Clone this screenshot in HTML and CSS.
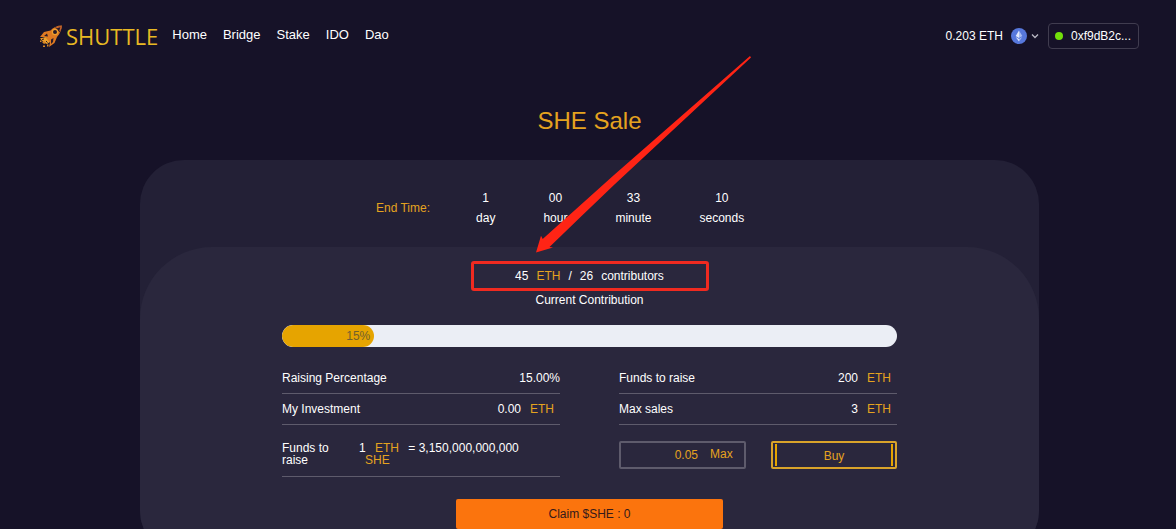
FILE: index.html
```html
<!DOCTYPE html>
<html lang="en">
<head>
<meta charset="utf-8">
<title>Shuttle - SHE Sale</title>
<link rel="stylesheet" href="styles.css">
</head>
<body>
<header class="header">
  <a class="brand" href="#">
    <svg class="brand-icon" viewBox="0 0 24 24" aria-hidden="true">
      <path d="M23 1.500C18 1.500 14 3.500 11.500 6.500L5 8L1 13L6 13L11 18.500L10 23L15.500 19L18 13C21 10 22.500 6 23 1.500Z" fill="#df7a22"/>
      <path d="M16 3.500L21 8.500L22.500 2Z" fill="#281a29"/>
      <path d="M22.300 2.200L17.200 3.900M22.300 2.200L20.800 7.200" stroke="#c8632c" stroke-width="1.200"/>
      <circle cx="16" cy="8" r="2.600" fill="#2b1c29" stroke="#f0a02c" stroke-width="1.200"/>
      <path d="M8 9.500L5 12L9 12.500ZM12 15.500L14.500 14L14 18L12 20Z" fill="#2b1c29"/>
      <path d="M1 14.500L6.500 13L11 18L8 20L5 18.500Z" fill="#eda02b"/>
      <path d="M3 18L5 17L7 19L5 20ZM1 16.500H2.500V18H1ZM4 21.500H6V23H4ZM8 20.500H9.500V22.500H8Z" fill="#d88725"/>
      <path d="M3 15.500L5 15M7 17L8.500 18.500" stroke="#2b1c29" stroke-width="1"/>
    </svg>
    <span>SHUTTLE</span>
  </a>
  <nav class="nav">
    <a href="#">Home</a><a href="#">Bridge</a><a href="#">Stake</a><a href="#">IDO</a><a href="#">Dao</a>
  </nav>
  <div class="wallet">
    <span>0.203 ETH</span>
    <button class="network" type="button" aria-label="Select network">
      <svg class="eth-icon" viewBox="0 0 16 16" aria-hidden="true">
        <circle cx="8" cy="8" r="8" fill="#5778dc"/>
        <path d="M8 2.500L4.700 8L8 10Z" fill="#e3eafc"/><path d="M8 2.500L11.300 8L8 10Z" fill="#a9bdf3"/>
        <path d="M4.700 9L8 13.500V11Z" fill="#e3eafc"/><path d="M11.300 9L8 13.500V11Z" fill="#a9bdf3"/>
      </svg>
      <svg class="chevron" viewBox="0 0 8 8" aria-hidden="true"><path d="M1 2.500L4 5.500L7 2.500" fill="none" stroke="#b9b8c4" stroke-width="1.300"/></svg>
    </button>
    <button class="account" type="button"><span class="dot"></span>0xf9dB2c...</button>
  </div>
</header>
<main class="main">
  <h1 class="title">SHE Sale</h1>
  <section class="card">
    <div class="countdown">
      <span class="gold">End Time:</span>
      <div class="unit day"><span>1</span><span>day</span></div>
      <div class="unit"><span>00</span><span>hour</span></div>
      <div class="unit"><span>33</span><span>minute</span></div>
      <div class="unit"><span>10</span><span>seconds</span></div>
    </div>
    <div class="panel">
      <div class="contribution">
        <span>45</span><span class="gold">ETH</span><span>/</span><span>26</span><span>contributors</span>
      </div>
      <p class="caption">Current Contribution</p>
      <div class="progress"><div class="progress-fill" style="width: 15%">15%</div></div>
      <div class="columns">
        <div>
          <div class="row"><span>Raising Percentage</span><span>15.00%</span></div>
          <div class="row"><span>My Investment</span><span class="amount">0.00<span class="gold">ETH</span></span></div>
          <div class="row rate"><span class="rate-label">Funds to raise</span><span class="rate-value">1 <span class="rate-eth">ETH</span> = 3,150,000,000,000 <span class="rate-she">SHE</span></span></div>
        </div>
        <div>
          <div class="row"><span>Funds to raise</span><span class="amount">200<span class="gold">ETH</span></span></div>
          <div class="row"><span>Max sales</span><span class="amount">3<span class="gold">ETH</span></span></div>
          <form class="purchase">
            <div class="field">
              <input class="field-input" type="text" value="0.05" aria-label="Amount in ETH">
              <button class="field-max" type="button">Max</button>
            </div>
            <button class="buy" type="button"><span>Buy</span></button>
          </form>
        </div>
      </div>
      <button class="claim" type="button">Claim $SHE : 0</button>
    </div>
  </section>
</main>
<svg class="arrow" viewBox="0 0 216 197" aria-hidden="true">
  <path d="M214 0L78 119L6.700 183L5 179.700L0 196.500L17 191.500L13.500 191L43.500 162L79 128L215 1.500Z" fill="#ff2415"/>
</svg>
</body>
</html>
```
FILE: styles.css
```css
* { box-sizing: border-box; }
body {
  margin: 0;
  position: relative;
  background: #161228;
  color: #fff;
  font: 12px/20px "Liberation Sans", Arial, sans-serif;
}
a { color: inherit; text-decoration: none; }
button, input { font: inherit; color: inherit; background: none; border: 0; padding: 0; margin: 0; }
.gold { color: #e5a31f; }

.header { display: flex; align-items: center; height: 72px; padding: 0 37px 0 39px; }
.brand { display: flex; align-items: center; gap: 3px; color: #e8b923; font: 22px/30px "Open Sans", "Noto Sans", sans-serif; }
.brand-icon { width: 24px; height: 24px; }
.nav { display: flex; gap: 16px; margin-left: 14px; padding-bottom: 3px; font-size: 13px; }
.wallet { display: flex; align-items: center; margin-left: auto; }
.network { display: flex; align-items: center; gap: 4px; margin: 0 9px 0 8px; }
.eth-icon { width: 16px; height: 16px; }
.chevron { width: 8px; height: 8px; }
.account { display: flex; align-items: center; gap: 8px; height: 26px; padding: 0 7px 0 6px; border: 1px solid #403c4f; border-radius: 4px; }
.dot { width: 8px; height: 8px; border-radius: 50%; background: #72df0a; }

.main { padding: 34px 137px 0 140px; }
.title { margin: 0; color: #e5a31f; font-size: 24px; line-height: 30px; font-weight: 400; text-align: center; }
.card { margin-top: 24px; border-radius: 44px; background: #232036; overflow: hidden; }
.countdown { display: flex; align-items: center; height: 87px; padding: 8px 0 0 236px; }
.unit { display: flex; flex-direction: column; margin-left: 48px; text-align: center; }
.day { margin-left: 46px; }

.panel { padding: 14px 142px 26px; border-radius: 72px 72px 0 0; background: #2a273d; }
.contribution { display: flex; justify-content: center; gap: 8px; width: 238px; margin: 0 auto; border: 3px solid #f02a20; border-radius: 3px; padding: 2px 0; }
.caption { margin: 0; line-height: 18px; text-align: center; }
.progress { height: 22px; margin-top: 16px; border-radius: 11px; background: #ebeef5; overflow: hidden; }
.progress-fill { height: 22px; padding-right: 4px; border-radius: 11px; background: #e6a400; color: #71602f; line-height: 22px; text-align: right; }
.columns { display: grid; grid-template-columns: 1fr 1fr; gap: 59px; margin-top: 16px; }
.row { display: flex; justify-content: space-between; align-items: center; height: 31px; border-bottom: 1px solid #5e5b6c; }
.amount { display: flex; gap: 9px; padding-right: 6px; }
.rate { height: 52px; justify-content: flex-start; padding-top: 6px; line-height: 12px; }
.rate-label { width: 60px; }
.rate-value { width: 180px; padding-left: 17px; }
.rate-eth, .rate-she { color: #e5a31f; }
.rate-eth { margin: 0 6px; }
.rate-she { margin-left: 6px; }
.purchase { display: flex; justify-content: space-between; margin-top: 16px; }
.field { display: flex; width: 127px; height: 28px; border: 2px solid #5e5b6c; border-radius: 2px; color: #e5a31f; }
.field-input { width: 77px; text-align: right; outline: 0; }
.field-max { margin-left: 12px; line-height: 22px; align-self: flex-start; }
.buy { width: 126px; height: 28px; padding: 1px 2px; border: 2px solid #d9a32a; border-radius: 2px; color: #e5a31f; }
.buy span { display: block; height: 22px; line-height: 24px; border: solid #e6a400; border-width: 0 2px; }
.claim { display: block; width: 267px; height: 30px; margin: 22px auto 0; border-radius: 2px; background: #fb740d; color: #34191b; }

.arrow { position: absolute; left: 536px; top: 56px; width: 216px; height: 197px; pointer-events: none; }
```
